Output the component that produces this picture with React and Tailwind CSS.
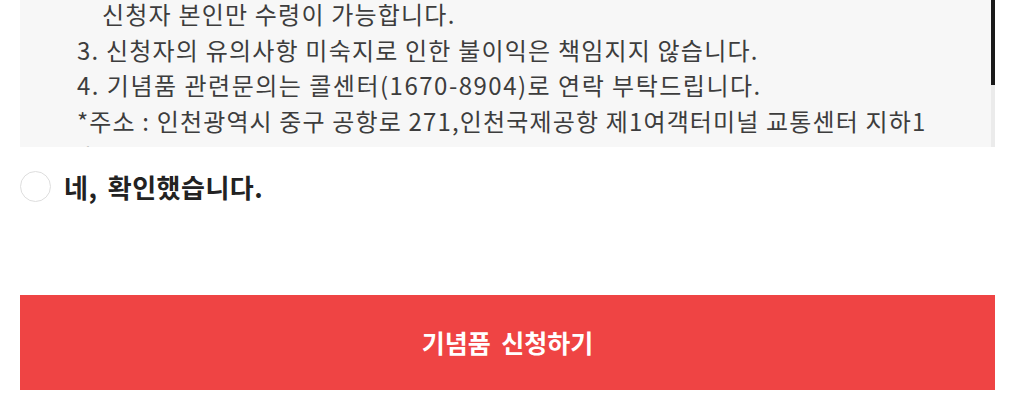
export default function App() {
  const font = { fontFamily: '"Noto Sans CJK KR", "Noto Sans", sans-serif' }

  return (
    <div className="w-[1017px] h-[408px] bg-white overflow-hidden" style={font}>
      <div className="pl-5 pr-[22px]">
        {/* notice box with its own thin scrollbar */}
        <div className="h-[147px] bg-[#f7f7f7] flex">
          <div className="flex-1 overflow-hidden">
            <div className="mt-[-4px] pl-[57px] text-[24px] leading-[35.7px] text-[#3d3d3d] tracking-[1.2px]">
              <p className="pl-[25px]">신청자 본인만 수령이 가능합니다.</p>
              <p>3. 신청자의 유의사항 미숙지로 인한 불이익은 책임지지 않습니다.</p>
              <p className="tracking-[1.5px]">4. 기념품 관련문의는 콜센터(1670-8904)로 연락 부탁드립니다.</p>
              <p className="tracking-[1.15px]">*주소 : 인천광역시 중구 공항로 271,인천국제공항 제1여객터미널 교통센터 지하1</p>
              <p>층</p>
            </div>
          </div>
          <div className="w-[4px] bg-[#ebebeb] flex flex-col">
            <div className="h-[85px] bg-[#1a1a1a]" />
          </div>
        </div>

        <label className="mt-[23px] flex items-center gap-[13px] h-[32px]">
          <span className="w-[31px] h-[31px] rounded-full border border-[#dedede] bg-white shrink-0" />
          <span className="text-[26px] font-bold text-[#222] tracking-[0.5px] [word-spacing:4px]">네, 확인했습니다.</span>
        </label>

        <button className="mt-[93px] w-full h-[95px] bg-[#ef4444] text-white text-[25px] font-bold [word-spacing:5px]">
          기념품 신청하기
        </button>
      </div>
    </div>
  )
}
